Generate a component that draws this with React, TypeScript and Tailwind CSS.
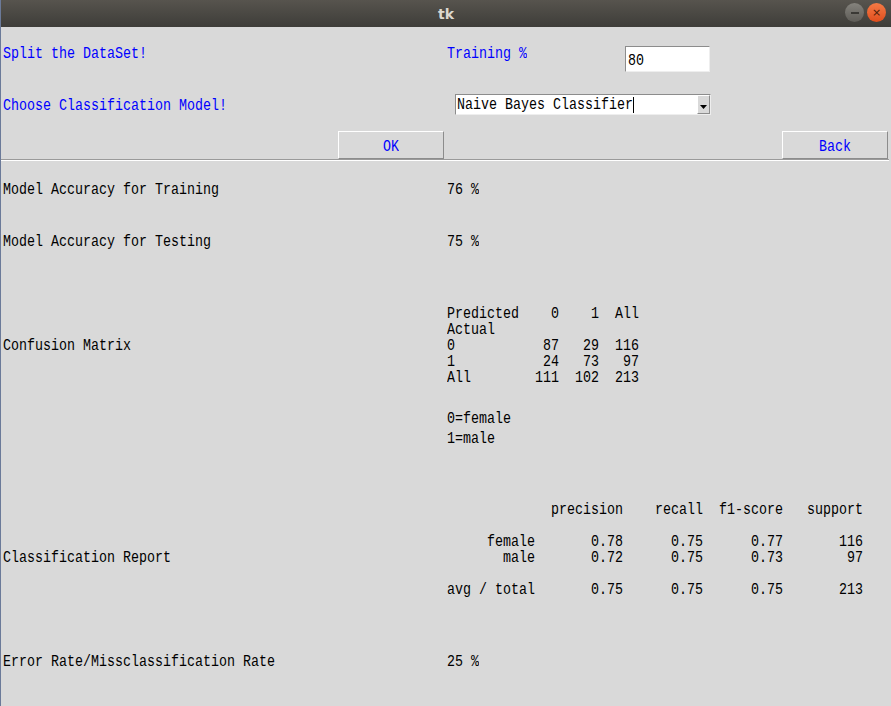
const mono = "font-['Liberation_Mono',monospace] text-[13.33px] leading-[16px]"

function T({ children, className = '' }: { children: React.ReactNode; className?: string }) {
  return (
    <span className={`inline-block origin-center scale-y-[1.3] whitespace-pre ${className}`}>
      {children}
    </span>
  )
}

function TkButton({ label }: { label: string }) {
  return (
    <button
      type="button"
      className="flex h-[28px] w-[106px] items-center justify-center border border-t-white border-l-white border-r-[#8c8c8c] border-b-[#8c8c8c] bg-[#d9d9d9] pt-[3px] text-[#0000ff]"
    >
      <T>{label}</T>
    </button>
  )
}

const matrix = [
  'Predicted    0    1  All',
  'Actual                  ',
  '0           87   29  116',
  '1           24   73   97',
  'All        111  102  213',
]

const report = [
  '             precision    recall  f1-score   support',
  '',
  '     female       0.78      0.75      0.77       116',
  '       male       0.72      0.75      0.73        97',
  '',
  'avg / total       0.75      0.75      0.75       213',
]

export default function App() {
  return (
    <div className={`h-[706px] w-[891px] overflow-hidden border-l border-[#6b7a99] bg-[#d9d9d9] text-black ${mono}`}>
      {/* title bar */}
      <div className="relative flex h-[27px] items-center justify-center bg-gradient-to-b from-[#57544e] to-[#3e3d39]">
        <span className="font-['DejaVu_Sans',sans-serif] text-[14px] font-bold text-[#dcd8cf]">tk</span>
        <div className="absolute right-[5px] top-[3px] flex gap-[3px]">
          <div className="flex h-[19px] w-[19px] items-center justify-center rounded-full bg-gradient-to-b from-[#85837d] to-[#5e5c57]">
            <div className="h-[2px] w-[8px] bg-[#3a3935]" />
          </div>
          <div className="flex h-[19px] w-[19px] items-center justify-center rounded-full bg-gradient-to-b from-[#f57a45] to-[#df4d1c] font-['DejaVu_Sans',sans-serif] text-[11px] leading-none text-[#4a1c0a]">
            ×
          </div>
        </div>
      </div>

      <div className="pl-[2px]">
        {/* split row */}
        <div className="grid h-[60px] grid-cols-[444px_1fr] text-[#0000ff]">
          <div className="mt-[19px]"><T>Split the DataSet!</T></div>
          <div className="flex">
            <div className="mt-[19px]"><T>Training %</T></div>
            <div className="ml-[98px] mt-[19px] flex h-[26px] w-[85px] items-center border border-t-[#8c8c8c] border-l-[#8c8c8c] border-r-[#eeeeee] border-b-[#eeeeee] bg-white pl-[2px] pt-[3px] text-black">
              <T>80</T>
            </div>
          </div>
        </div>

        {/* model row */}
        <div className="grid h-[44px] grid-cols-[444px_1fr] text-[#0000ff]">
          <div className="mt-[11px]"><T>Choose Classification Model!</T></div>
          <div>
            <div className="ml-[8px] mt-[7px] flex h-[21px] w-[256px] border border-t-[#8c8c8c] border-l-[#8c8c8c] border-r-[#eeeeee] border-b-[#eeeeee] bg-white text-black">
              <div className="flex flex-1 items-center pl-[1px] pt-[1px]">
                <T>Naive Bayes Classifier</T>
                <div className="h-[16px] w-px bg-black" />
              </div>
              <div className="flex w-[13px] items-center justify-center border border-t-white border-l-white border-r-[#8c8c8c] border-b-[#8c8c8c] bg-[#d9d9d9]">
                <svg width="7" height="4" viewBox="0 0 7 4" className="mt-[5px]">
                  <path d="M0 0h7L3.5 4z" fill="black" />
                </svg>
              </div>
            </div>
          </div>
        </div>

        {/* buttons */}
        <div className="flex h-[28px] pl-[335px]">
          <TkButton label="OK" />
          <div className="ml-[338px]">
            <TkButton label="Back" />
          </div>
        </div>
      </div>

      <div className="mr-[2px] h-[2px] border-t border-b border-t-[#9a9a9a] border-b-white" />

      <div className="pl-[2px]">
        <div className="mt-[21px] grid grid-cols-[444px_1fr]">
          <T>Model Accuracy for Training</T>
          <T>76 %</T>
        </div>
        <div className="mt-[36px] grid grid-cols-[444px_1fr]">
          <T>Model Accuracy for Testing</T>
          <T>75 %</T>
        </div>

        <div className="mt-[56px] grid grid-cols-[444px_1fr]">
          <div className="mt-[32px]"><T>Confusion Matrix</T></div>
          <div className="flex flex-col">
            {matrix.map((line, i) => (
              <div key={i} className="h-[16px]"><T>{line}</T></div>
            ))}
            <div className="mt-[25px] flex flex-col gap-[4px]">
              <div className="h-[16px]"><T>0=female</T></div>
              <div className="h-[16px]"><T>1=male</T></div>
            </div>
          </div>
        </div>

        <div className="mt-[55px] grid grid-cols-[444px_1fr]">
          <div className="mt-[48px]"><T>Classification Report</T></div>
          <div className="flex flex-col">
            {report.map((line, i) => (
              <div key={i} className="h-[16px]"><T>{line}</T></div>
            ))}
          </div>
        </div>

        <div className="mt-[56px] grid grid-cols-[444px_1fr]">
          <T>Error Rate/Missclassification Rate</T>
          <T>25 %</T>
        </div>
      </div>
    </div>
  )
}
